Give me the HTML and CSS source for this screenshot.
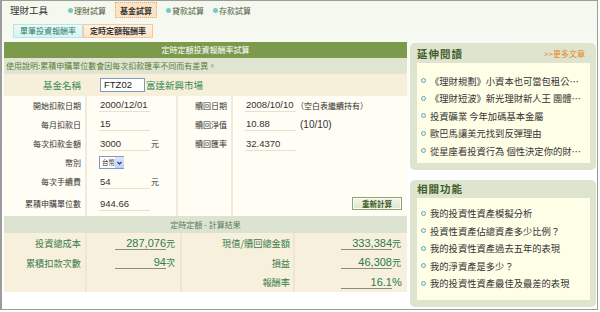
FILE: index.html
```html
<!DOCTYPE html>
<html lang="zh-Hant">
<head>
    <meta charset="UTF-8">
    <title>理財工具 - 基金試算</title>
    <link rel="stylesheet" href="styles.css">
</head>
<body>
    <div class="frame">
        <div class="topnav">
            <span class="brand">理財工具</span>
            <span class="nav-item"><i class="dot"></i>理財試算</span>
            <span class="nav-item active">基金試算</span>
            <span class="nav-item"><i class="dot"></i>貸款試算</span>
            <span class="nav-item"><i class="dot"></i>存款試算</span>
        </div>

        <div class="subtabs">
            <span class="subtab">單筆投資報酬率</span>
            <span class="subtab current">定時定額報酬率</span>
        </div>

        <div class="main">
            <div class="calc">
                <div class="calc-title">定時定額投資報酬率試算</div>
                <div class="calc-note">使用說明:累積申購單位數會因每次扣款匯率不同而有差異。</div>
                <div class="fund-row">
                    <span class="fund-label">基金名稱</span>
                    <span class="fund-input">FTZ02</span>
                    <span class="fund-name">富達新興市場</span>
                </div>

                <div class="form-grid">
                    <div class="cell label">開始扣款日期</div>
                    <div class="cell value"><span class="field">2000/12/01</span></div>
                    <div class="cell label">贖回日期</div>
                    <div class="cell value"><span class="field">2008/10/10</span><span class="note">（空白表繼續持有）</span></div>

                    <div class="cell label">每月扣款日</div>
                    <div class="cell value"><span class="field">15</span></div>
                    <div class="cell label">贖回淨值</div>
                    <div class="cell value"><span class="field">10.88</span><span class="extra">(10/10)</span></div>

                    <div class="cell label">每次扣款金額</div>
                    <div class="cell value"><span class="field">3000</span><span class="unit">元</span></div>
                    <div class="cell label">贖回匯率</div>
                    <div class="cell value"><span class="field">32.4370</span></div>

                    <div class="cell label">幣別</div>
                    <div class="cell value">
                        <span class="select"><span class="select-text">台幣</span><span class="select-btn"><svg width="5" height="4" viewBox="0 0 5 4"><path d="M0.5 0.8 L2.5 3 L4.5 0.8" fill="none" stroke="#2a3a6a" stroke-width="1.2"/></svg></span></span>
                    </div>
                    <div class="cell label"></div>
                    <div class="cell value"></div>

                    <div class="cell label">每次手續費</div>
                    <div class="cell value"><span class="field">54</span><span class="unit">元</span></div>
                    <div class="cell label"></div>
                    <div class="cell value"></div>

                    <div class="cell label">累積申購單位數</div>
                    <div class="cell value"><span class="field">944.66</span></div>
                    <div class="cell label"></div>
                    <div class="cell action"><span class="btn">重新計算</span></div>
                </div>

                <div class="result-title">定時定額 - 計算結果</div>
                <div class="result-grid">
                    <div class="cell rlabel">投資總成本</div>
                    <div class="cell rvalue"><span class="amount">287,076</span><span class="runit">元</span></div>
                    <div class="cell rlabel">現值/贖回總金額</div>
                    <div class="cell rvalue"><span class="amount">333,384</span><span class="runit">元</span></div>

                    <div class="cell rlabel">累積扣款次數</div>
                    <div class="cell rvalue"><span class="amount">94</span><span class="runit">次</span></div>
                    <div class="cell rlabel">損益</div>
                    <div class="cell rvalue"><span class="amount">46,308</span><span class="runit">元</span></div>

                    <div class="cell rlabel"></div>
                    <div class="cell rvalue"></div>
                    <div class="cell rlabel">報酬率</div>
                    <div class="cell rvalue"><span class="amount">16.1</span><span class="runit pct">%</span></div>
                </div>
            </div>

            <div class="side">
                <div class="side-box">
                    <div class="side-head">
                        <h2>延伸閱讀</h2>
                        <span class="more">&gt;&gt;更多文章</span>
                    </div>
                    <ul class="side-list">
                        <li>《理財規劃》小資本也可當包租公…</li>
                        <li>《理財短波》新光理財新人王 團體…</li>
                        <li>投資礦業 今年加碼基本金屬</li>
                        <li>歐巴馬讓美元找到反彈理由</li>
                        <li>從星座看投資行為 個性決定你的財…</li>
                    </ul>
                </div>
                <div class="side-box related">
                    <div class="side-head">
                        <h2>相關功能</h2>
                    </div>
                    <ul class="side-list">
                        <li>我的投資性資產模擬分析</li>
                        <li>投資性資產佔總資產多少比例？</li>
                        <li>我的投資性資產過去五年的表現</li>
                        <li>我的淨資產是多少？</li>
                        <li>我的投資性資產最佳及最差的表現</li>
                    </ul>
                </div>
            </div>
        </div>
    </div>
</body>
</html>
```

FILE: styles.css
```css
body {
    margin: 0;
    background: #fff;
    color: #333;
    font-family: "Noto Sans CJK TC", "Noto Sans", sans-serif;
}

.frame {
    width: 598px;
    height: 310px;
    box-sizing: border-box;
    border: 1px solid #9c9c9c;
    border-left-width: 2px;
    padding-left: 2px;
    background: linear-gradient(#f3f7ec, #fafcf6 60px, #fff 160px);
}

/* top navigation */
.topnav {
    display: flex;
    align-items: center;
    gap: 9px;
    height: 16px;
    margin-top: 1px;
}

.brand {
    font-size: 9.5px;
    margin-left: 6px;
    margin-right: 11px;
    color: #333;
}

.nav-item {
    display: flex;
    align-items: center;
    gap: 1px;
    font-size: 8px;
    color: #4f5f44;
}

.dot {
    width: 5px;
    height: 5px;
    border-radius: 50%;
    background: #72cbc6;
}

.nav-item.active {
    height: 16px;
    box-sizing: border-box;
    padding: 0 4px;
    border: 1px dotted #eea869;
    background: #fce3c6;
    font-weight: bold;
    color: #333;
}

.subtabs {
    display: flex;
    margin: 6px 0 0 9px;
}

.subtab {
    font-size: 8px;
    line-height: 12px;
    padding: 0 6px;
    border: 1px solid #b9e6e3;
    background: linear-gradient(#eafbf9, #d8f4f1);
    color: #2d7a68;
}

.subtab.current {
    border-color: #f4c9a0;
    background: linear-gradient(#fff3e4, #fce3c8);
    color: #333;
    font-weight: bold;
}

/* main area */
.main {
    display: flex;
    gap: 3px;
    margin-top: 4px;
}

.calc {
    width: 403px;
}

.calc-title {
    height: 16px;
    line-height: 16px;
    background: #7b9a4b;
    color: #fff;
    font-size: 8px;
    text-align: center;
}

.calc-note {
    height: 16px;
    line-height: 16px;
    padding-left: 2px;
    background: #dfe5d1;
    color: #5b7d3b;
    font-size: 8px;
}

.fund-row {
    height: 22px;
    display: flex;
    align-items: center;
    background: #f6f0da;
}

.fund-label {
    width: 83px;
    box-sizing: border-box;
    padding-right: 6px;
    text-align: right;
    font-size: 9.5px;
    color: #3a8658;
}

.fund-input {
    width: 45px;
    height: 14px;
    margin-left: 13px;
    box-sizing: border-box;
    padding-left: 3px;
    border: 1px solid #7f9db9;
    background: #fff;
    font: 9.5px/12px "Liberation Sans", sans-serif;
    color: #222;
}

.fund-name {
    margin-left: 1px;
    font-size: 9.5px;
    color: #3a8658;
}

.form-grid {
    display: grid;
    grid-template-columns: 83px 91px 55px 174px;
    grid-template-rows: 18px 20px 19px 19px 19px 25px;
    background: #fffdf4;
}

.cell {
    display: flex;
    align-items: center;
    box-sizing: border-box;
    border-right: 2px solid #efeadb;
}

.cell:nth-child(4n) {
    border-right: none;
}

.label {
    justify-content: flex-end;
    padding-right: 4px;
    font-size: 8px;
    color: #333;
}

.value {
    padding-left: 12px;
}

.field {
    width: 51px;
    box-sizing: border-box;
    padding-left: 1px;
    border-bottom: 1px solid #e6e1cd;
    font: 9.5px/13px "Liberation Sans", sans-serif;
    color: #333;
}

.unit {
    margin-left: 1px;
    font-size: 8px;
}

.note {
    font-size: 8px;
    color: #333;
}

.extra {
    margin-left: 4px;
    font: 10px "Liberation Sans", sans-serif;
}

.select {
    display: flex;
    align-items: center;
    width: 25px;
    height: 13px;
    box-sizing: border-box;
    border: 1px solid #7f9db9;
    background: #fff;
    white-space: nowrap;
}

.select-text {
    padding-left: 2px;
    font-size: 6.5px;
    line-height: 11px;
}

.select-btn {
    flex: none;
    display: flex;
    align-items: center;
    justify-content: center;
    width: 9px;
    height: 100%;
    margin-left: auto;
    background: linear-gradient(#dbe6fd, #bccffa);
}

.action {
    justify-content: flex-end;
    padding-right: 5px;
}

.btn {
    display: flex;
    align-items: center;
    justify-content: center;
    width: 50px;
    height: 13px;
    box-sizing: border-box;
    border: 1px solid #8ca56a;
    background: linear-gradient(#f2f6e8, #dde7c9);
    box-shadow: inset 0 0 0 1px #fbfdf6;
    font-size: 7.5px;
    font-weight: bold;
    color: #3b5a2b;
}

/* results */
.result-title {
    height: 17px;
    line-height: 17px;
    background: #dce3d0;
    text-align: center;
    font-size: 8px;
    color: #5d7d5d;
}

.result-grid {
    display: grid;
    grid-template-columns: 83px 95px 113px 112px;
    grid-template-rows: 20px 19px 20px;
    background: #f6f0dc;
}

.result-grid .cell {
    border-right-color: #ede6d0;
}

.rlabel {
    justify-content: flex-end;
    padding-right: 4px;
    font-size: 9.2px;
    color: #3a7a4a;
}

.rlabel:nth-child(4n+3) {
    padding-right: 3px;
}

.rvalue {
    padding-left: 28px;
}

.rvalue:nth-child(4n) {
    padding-left: 46px;
}

.amount {
    width: 51px;
    box-sizing: border-box;
    text-align: right;
    border-bottom: 1px solid #8b8b80;
    font: 11px/12px "Liberation Sans", sans-serif;
    color: #2b7a50;
}

.runit {
    font-size: 9px;
    color: #2b7a50;
}

.runit.pct {
    font: 11px "Liberation Sans", sans-serif;
}

/* sidebar */
.side {
    width: 186px;
    margin-top: 1px;
}

.side-box {
    padding: 0 6px 7px 7px;
    border-radius: 5px;
    background: #dfe4cf;
}

.side-box + .side-box {
    margin-top: 10px;
}

.side-head {
    display: flex;
    align-items: center;
    justify-content: space-between;
    height: 20px;
    padding-right: 5px;
}

.related .side-head {
    height: 18px;
}

.side-head h2 {
    margin: 0;
    font-size: 10.5px;
    font-weight: bold;
    letter-spacing: 1px;
    color: #3f5e2c;
}

.more {
    font-size: 8px;
    color: #e8861e;
}

.side-list {
    list-style: none;
    margin: 0;
    padding: 9px 0 3px 4px;
    background: #fffee7;
}

.related .side-list {
    padding: 7px 0 7.5px 4px;
}

.side-list li {
    display: flex;
    align-items: center;
    height: 17.5px;
    font-size: 9.3px;
    color: #333;
    white-space: nowrap;
    overflow: hidden;
}

.side-list li::before {
    content: "";
    flex: none;
    width: 3px;
    height: 3px;
    margin-right: 4px;
    border: 1px solid #6aa3ae;
    border-radius: 50%;
    background: #e6f7f7;
}
```
